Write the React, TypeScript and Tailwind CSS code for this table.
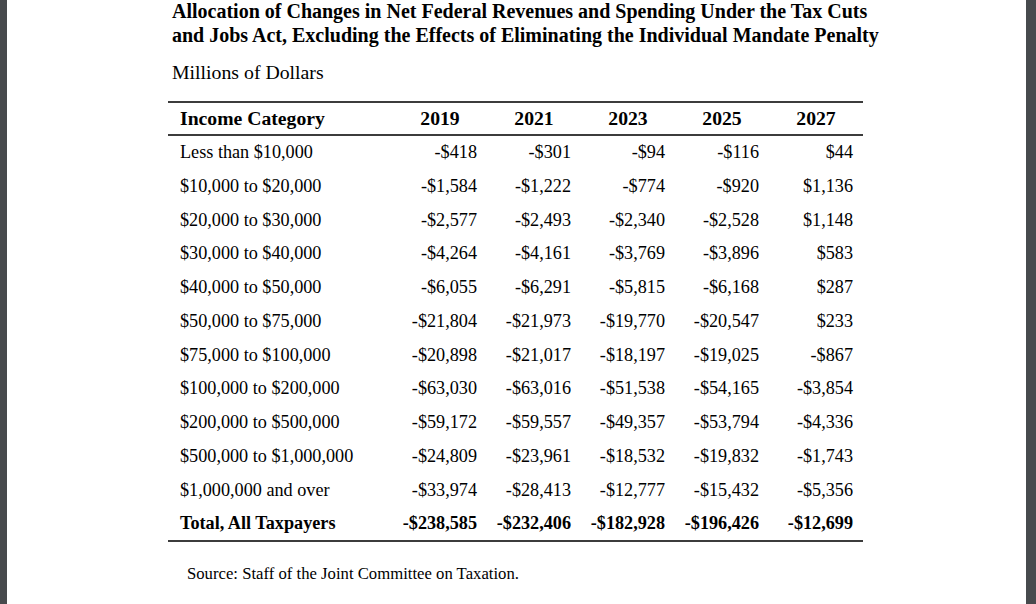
const rows: [string, string[]][] = [
  ["Less than $10,000", ["-$418", "-$301", "-$94", "-$116", "$44"]],
  ["$10,000 to $20,000", ["-$1,584", "-$1,222", "-$774", "-$920", "$1,136"]],
  ["$20,000 to $30,000", ["-$2,577", "-$2,493", "-$2,340", "-$2,528", "$1,148"]],
  ["$30,000 to $40,000", ["-$4,264", "-$4,161", "-$3,769", "-$3,896", "$583"]],
  ["$40,000 to $50,000", ["-$6,055", "-$6,291", "-$5,815", "-$6,168", "$287"]],
  ["$50,000 to $75,000", ["-$21,804", "-$21,973", "-$19,770", "-$20,547", "$233"]],
  ["$75,000 to $100,000", ["-$20,898", "-$21,017", "-$18,197", "-$19,025", "-$867"]],
  ["$100,000 to $200,000", ["-$63,030", "-$63,016", "-$51,538", "-$54,165", "-$3,854"]],
  ["$200,000 to $500,000", ["-$59,172", "-$59,557", "-$49,357", "-$53,794", "-$4,336"]],
  ["$500,000 to $1,000,000", ["-$24,809", "-$23,961", "-$18,532", "-$19,832", "-$1,743"]],
  ["$1,000,000 and over", ["-$33,974", "-$28,413", "-$12,777", "-$15,432", "-$5,356"]],
];

const years = ["2019", "2021", "2023", "2025", "2027"];
const totals = ["-$238,585", "-$232,406", "-$182,928", "-$196,426", "-$12,699"];

export default function App() {
  return (
    <div className="flex h-[604px] w-[1036px] overflow-hidden bg-white font-['Liberation_Serif',serif] text-black">
      <div className="w-[7px] bg-[#474a4d]" />
      <div className="flex-1 pl-[165px]">
        <h1 className="mt-[-1px] text-[20px] font-bold leading-[24px]">
          Allocation of Changes in Net Federal Revenues and Spending Under the Tax Cuts
          <br />
          and Jobs Act, Excluding the Effects of Eliminating the Individual Mandate Penalty
        </h1>
        <div className="mt-[13px] text-[19.8px] leading-[24px]">Millions of Dollars</div>

        <div className="ml-[-4px] mt-[17px] w-[695px] border-y-2 border-[#3c3c3c]">
          <div className="grid h-[33px] grid-cols-[225px_repeat(5,94px)] items-center border-b-2 border-[#3c3c3c] text-[19.7px] font-bold">
            <div className="pl-[12px]">Income Category</div>
            {years.map((y) => (
              <div key={y} className="text-center">{y}</div>
            ))}
          </div>
          {rows.map(([label, vals]) => (
            <div key={label} className="grid h-[33.75px] grid-cols-[225px_repeat(5,94px)] items-center text-[18.2px]">
              <div className="pl-[12px]">{label}</div>
              {vals.map((v, i) => (
                <div key={i} className="pr-[10px] text-right">{v}</div>
              ))}
            </div>
          ))}
          <div className="grid h-[33px] grid-cols-[225px_repeat(5,94px)] items-center text-[18.2px] font-bold">
            <div className="pl-[12px]">Total, All Taxpayers</div>
            {totals.map((v, i) => (
              <div key={i} className="pr-[10px] text-right">{v}</div>
            ))}
          </div>
        </div>

        <div className="ml-[15px] mt-[19px] text-[16.7px]">Source: Staff of the Joint Committee on Taxation.</div>
      </div>
      <div className="w-[10px] bg-[#474a4d]" />
    </div>
  );
}
